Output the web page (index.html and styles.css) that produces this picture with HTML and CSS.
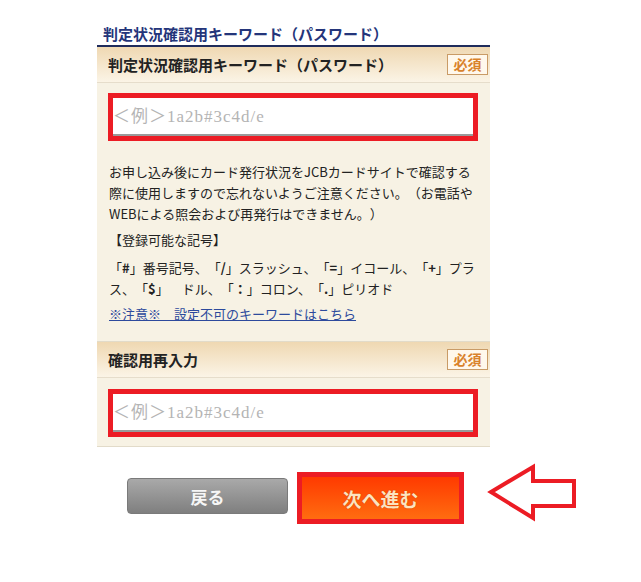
FILE: index.html
```html
<!DOCTYPE html>
<html lang="ja">
<head>
    <meta charset="UTF-8">
    <meta name="viewport" content="width=device-width, initial-scale=1.0">
    <title>判定状況確認用キーワード</title>
    <link rel="stylesheet" href="styles.css">
</head>
<body>
    <div class="page">
        <div class="form">
            <h1 class="title">判定状況確認用キーワード（パスワード）</h1>

            <div class="item">
                <div class="item_head">
                    <span>判定状況確認用キーワード（パスワード）</span>
                    <span class="must">必須</span>
                </div>
                <div class="item_body">
                    <input type="password" class="field" placeholder="＜例＞1a2b#3c4d/e">
                    <p class="note note_first">お申し込み後にカード発行状況をJCBカードサイトで確認する際に使用しますので忘れないようご注意ください。（お電話やWEBによる照会および再発行はできません。）</p>
                    <p class="note note_label">【登録可能な記号】</p>
                    <p class="note note_marks">「<b>#</b>」番号記号、「<b>/</b>」スラッシュ、「<b>=</b>」イコール、「<b>+</b>」プラ<br>ス、「<b>$</b>」　ドル、「<b>：</b>」コロン、「<b>.</b>」ピリオド</p>
                    <p class="note note_link"><a href="#">※注意※　設定不可のキーワードはこちら</a></p>
                </div>
            </div>

            <div class="item">
                <div class="item_head">
                    <span>確認用再入力</span>
                    <span class="must">必須</span>
                </div>
                <div class="item_body item_body_short">
                    <input type="password" class="field" placeholder="＜例＞1a2b#3c4d/e">
                </div>
            </div>
        </div>

        <div class="buttons">
            <button class="btn_back">戻る</button>
            <button class="btn_next">次へ進む</button>
            <svg class="arrow" width="92" height="60" viewBox="0 0 92 60">
                <polygon points="5,29 47,4 47,18 88,18 88,43 47,43 47,55" fill="#fff" stroke="#ec1c24" stroke-width="4" stroke-linejoin="miter"/>
            </svg>
        </div>
    </div>
</body>
</html>
```

FILE: styles.css
```css
body{
    margin:0;
    background:#fff;
    font-family:"Noto Sans CJK JP", sans-serif;
    color:#222;
    text-spacing-trim:space-all;
}
.page{
    width:641px;
}
.form{
    width:393px;
    margin-left:97px;
    padding-top:23px;
}
.title{
    margin:0;
    padding-left:6px;
    font-size:15px;
    font-weight:bold;
    line-height:22px;
    color:#24357a;
    border-bottom:2px solid #1f2c5c;
}
.item_head{
    display:flex;
    justify-content:space-between;
    align-items:center;
    height:35px;
    padding:0 2px 0 11px;
    background:linear-gradient(#efd8b2, #fbf4e6);
    border-bottom:1px solid #e6ddcb;
    font-size:15px;
    font-weight:bold;
    color:#222;
}
.must{
    width:39px;
    height:19px;
    line-height:19px;
    text-align:center;
    border:1px solid #c99b66;
    background:#fff8ec;
    color:#d9822b;
    font-size:14px;
    font-weight:bold;
}
.item_body{
    background:#f7f2e4;
    padding:10px 10px 17px 11px;
    border-bottom:1px solid #e2dbc9;
}
.item_body_short{
    padding-top:11px;
    padding-bottom:9px;
}
.field{
    display:block;
    box-sizing:border-box;
    width:370px;
    height:48px;
    margin:0;
    padding:0;
    border:5px solid #ec1c24;
    background:#fff;
    box-shadow:inset 0 -2px 0 #9a9a9a;
    outline:none;
    font-family:"Liberation Serif", "Noto Sans CJK JP", serif;
    font-size:17px;
    letter-spacing:1px;
}
.field::placeholder{
    color:#b4b4b4;
}
.note{
    margin:0;
    padding-left:1px;
    font-size:13px;
    line-height:21px;
    color:#222;
}
.note b{
    font-weight:bold;
}
.note_first{
    margin-top:20px;
}
.note_label{
    margin-top:5px;
}
.note_marks{
    margin-top:7px;
}
.note_link{
    margin-top:4px;
}
.note_link a{
    color:#2d4a9c;
}
.buttons{
    display:flex;
    align-items:flex-start;
    padding-top:25px;
    padding-left:127px;
}
.btn_back{
    width:161px;
    height:36px;
    margin-top:6px;
    border:1px solid #7a7a7a;
    border-radius:4px;
    background:linear-gradient(#a9a9a9, #7f7f7f);
    color:#f6f6f6;
    font-family:"Noto Sans CJK JP", sans-serif;
    font-size:17px;
    font-weight:bold;
    padding:0;
}
.btn_next{
    width:167px;
    height:52px;
    margin-left:9px;
    border:5px solid #ec1c24;
    background:linear-gradient(#ff3a00, #ff6c10);
    color:#fde3bf;
    font-family:"Noto Sans CJK JP", sans-serif;
    font-size:19px;
    font-weight:bold;
    text-shadow:0 0 1px #b83000;
    padding:0;
}
.arrow{
    display:block;
    margin-left:22px;
    margin-top:-9px;
}
```
